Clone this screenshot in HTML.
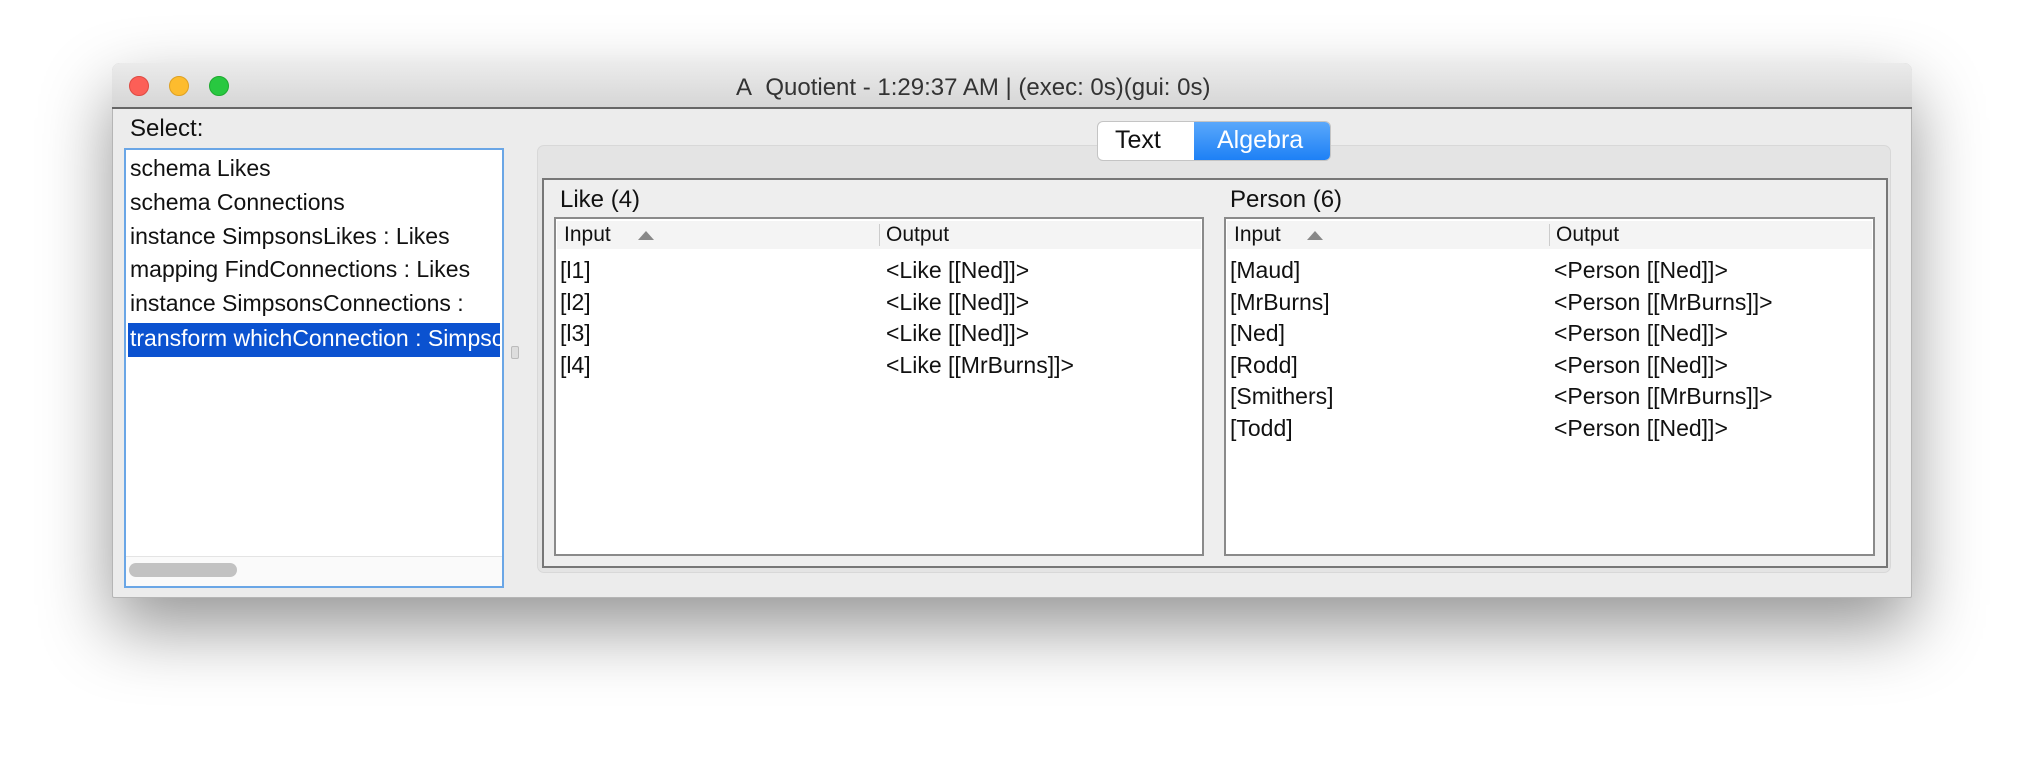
<!DOCTYPE html>
<html><head><meta charset="utf-8"><style>
*{margin:0;padding:0;box-sizing:border-box}
body{width:2024px;height:760px;background:#fff;position:relative;overflow:hidden;font-family:"Liberation Sans",sans-serif;color:#111}
.a{position:absolute}
.win{left:112px;top:63px;width:1800px;height:535px;background:#ececec;border:1px solid #b5b5b5;border-radius:8px 8px 2px 2px;box-shadow:0 30px 70px rgba(0,0,0,.42)}
.tb{left:112px;top:63px;width:1800px;height:46px;background:linear-gradient(#ebebeb,#d6d6d6);border-radius:8px 8px 0 0;border-bottom:2px solid #666}
.dot{width:20px;height:20px;border-radius:50%;top:76px}
.t{font-size:23px;white-space:nowrap}
.list{left:124px;top:148px;width:380px;height:440px;background:#fff;border:2px solid #6aa6e6}
.row{left:130px;font-size:23px;white-space:nowrap}
.tbl{background:#fff;border:2px solid #8a8a8a}
.hdr{background:#f4f4f4;height:28px}
</style></head><body>
<div class="a win"></div>
<div class="a tb"></div>
<div class="a dot" style="left:129px;background:#fc5f57;border:1px solid #de4a42"></div>
<div class="a dot" style="left:169px;background:#fdbc2e;border:1px solid #dea123"></div>
<div class="a dot" style="left:209px;background:#28c840;border:1px solid #1eaa30"></div>
<div class="a t" style="left:736px;top:74px;color:#333;font-size:24px">A&nbsp; Quotient - 1:29:37 AM | (exec: 0s)(gui: 0s)</div>
<div class="a t" style="left:130px;top:115px;font-size:24px">Select:</div>
<div class="a list"></div>
<div class="a row" style="top:155px">schema Likes</div>
<div class="a row" style="top:189px">schema Connections</div>
<div class="a row" style="top:223px">instance SimpsonsLikes : Likes</div>
<div class="a" style="left:130px;top:256px;width:370px;overflow:hidden;font-size:23px;white-space:nowrap">mapping FindConnections : Likes</div>
<div class="a" style="left:130px;top:290px;width:370px;overflow:hidden;font-size:23px;white-space:nowrap">instance SimpsonsConnections :</div>
<div class="a" style="left:128px;top:323px;width:372px;height:34px;background:#0b52d0"></div>
<div class="a" style="left:130px;top:325px;width:370px;overflow:hidden;font-size:23px;white-space:nowrap;color:#fff">transform whichConnection : Simpsons</div>
<div class="a" style="left:126px;top:556px;width:376px;height:30px;background:#fafafa;border-top:1px solid #e4e4e4"></div>
<div class="a" style="left:129px;top:563px;width:108px;height:14px;background:#c2c2c2;border-radius:7px"></div>
<div class="a" style="left:511px;top:346px;width:8px;height:13px;background:#ddd;border:1px solid #bbb;border-radius:2px"></div>
<div class="a" style="left:537px;top:145px;width:1354px;height:428px;background:#e4e4e4;border:1px solid #d8d8d8;border-radius:7px"></div>
<div class="a" style="left:542px;top:178px;width:1346px;height:390px;background:#eeeeee;border:2px solid #777"></div>
<div class="a" style="left:1097px;top:121px;width:234px;height:40px;border:1px solid #c4c4c4;border-radius:6px;background:#fff;overflow:hidden">
<div class="a" style="left:96px;top:0;width:138px;height:40px;background:linear-gradient(#5aa8fb,#1a7ef5)"></div></div>
<div class="a t" style="left:1115px;top:126px;font-size:25px">Text</div>
<div class="a t" style="left:1217px;top:126px;font-size:25px;color:#fff">Algebra</div>
<div class="a t" style="left:560px;top:186px;font-size:24px">Like (4)</div>
<div class="a t" style="left:1230px;top:186px;font-size:24px">Person (6)</div>
<div class="a tbl" style="left:554px;top:217px;width:650px;height:339px"></div>
<div class="a hdr" style="left:557px;top:221px;width:644px"></div>
<div class="a" style="left:879px;top:224px;width:1px;height:22px;background:#ccc"></div>
<div class="a t" style="left:564px;top:223px;font-size:21px">Input</div>
<div class="a" style="left:638px;top:231px;border-left:8px solid transparent;border-right:8px solid transparent;border-bottom:9px solid #888"></div>
<div class="a t" style="left:886px;top:223px;font-size:21px">Output</div>
<div class="a t" style="left:560px;top:257px">[l1]</div><div class="a t" style="left:886px;top:257px">&lt;Like [[Ned]]&gt;</div>
<div class="a t" style="left:560px;top:289px">[l2]</div><div class="a t" style="left:886px;top:289px">&lt;Like [[Ned]]&gt;</div>
<div class="a t" style="left:560px;top:320px">[l3]</div><div class="a t" style="left:886px;top:320px">&lt;Like [[Ned]]&gt;</div>
<div class="a t" style="left:560px;top:352px">[l4]</div><div class="a t" style="left:886px;top:352px">&lt;Like [[MrBurns]]&gt;</div>
<div class="a tbl" style="left:1224px;top:217px;width:651px;height:339px"></div>
<div class="a hdr" style="left:1227px;top:221px;width:645px"></div>
<div class="a" style="left:1549px;top:224px;width:1px;height:22px;background:#ccc"></div>
<div class="a t" style="left:1234px;top:223px;font-size:21px">Input</div>
<div class="a" style="left:1307px;top:231px;border-left:8px solid transparent;border-right:8px solid transparent;border-bottom:9px solid #888"></div>
<div class="a t" style="left:1556px;top:223px;font-size:21px">Output</div>
<div class="a t" style="left:1230px;top:257px">[Maud]</div><div class="a t" style="left:1554px;top:257px">&lt;Person [[Ned]]&gt;</div>
<div class="a t" style="left:1230px;top:289px">[MrBurns]</div><div class="a t" style="left:1554px;top:289px">&lt;Person [[MrBurns]]&gt;</div>
<div class="a t" style="left:1230px;top:320px">[Ned]</div><div class="a t" style="left:1554px;top:320px">&lt;Person [[Ned]]&gt;</div>
<div class="a t" style="left:1230px;top:352px">[Rodd]</div><div class="a t" style="left:1554px;top:352px">&lt;Person [[Ned]]&gt;</div>
<div class="a t" style="left:1230px;top:383px">[Smithers]</div><div class="a t" style="left:1554px;top:383px">&lt;Person [[MrBurns]]&gt;</div>
<div class="a t" style="left:1230px;top:415px">[Todd]</div><div class="a t" style="left:1554px;top:415px">&lt;Person [[Ned]]&gt;</div>
</body></html>
